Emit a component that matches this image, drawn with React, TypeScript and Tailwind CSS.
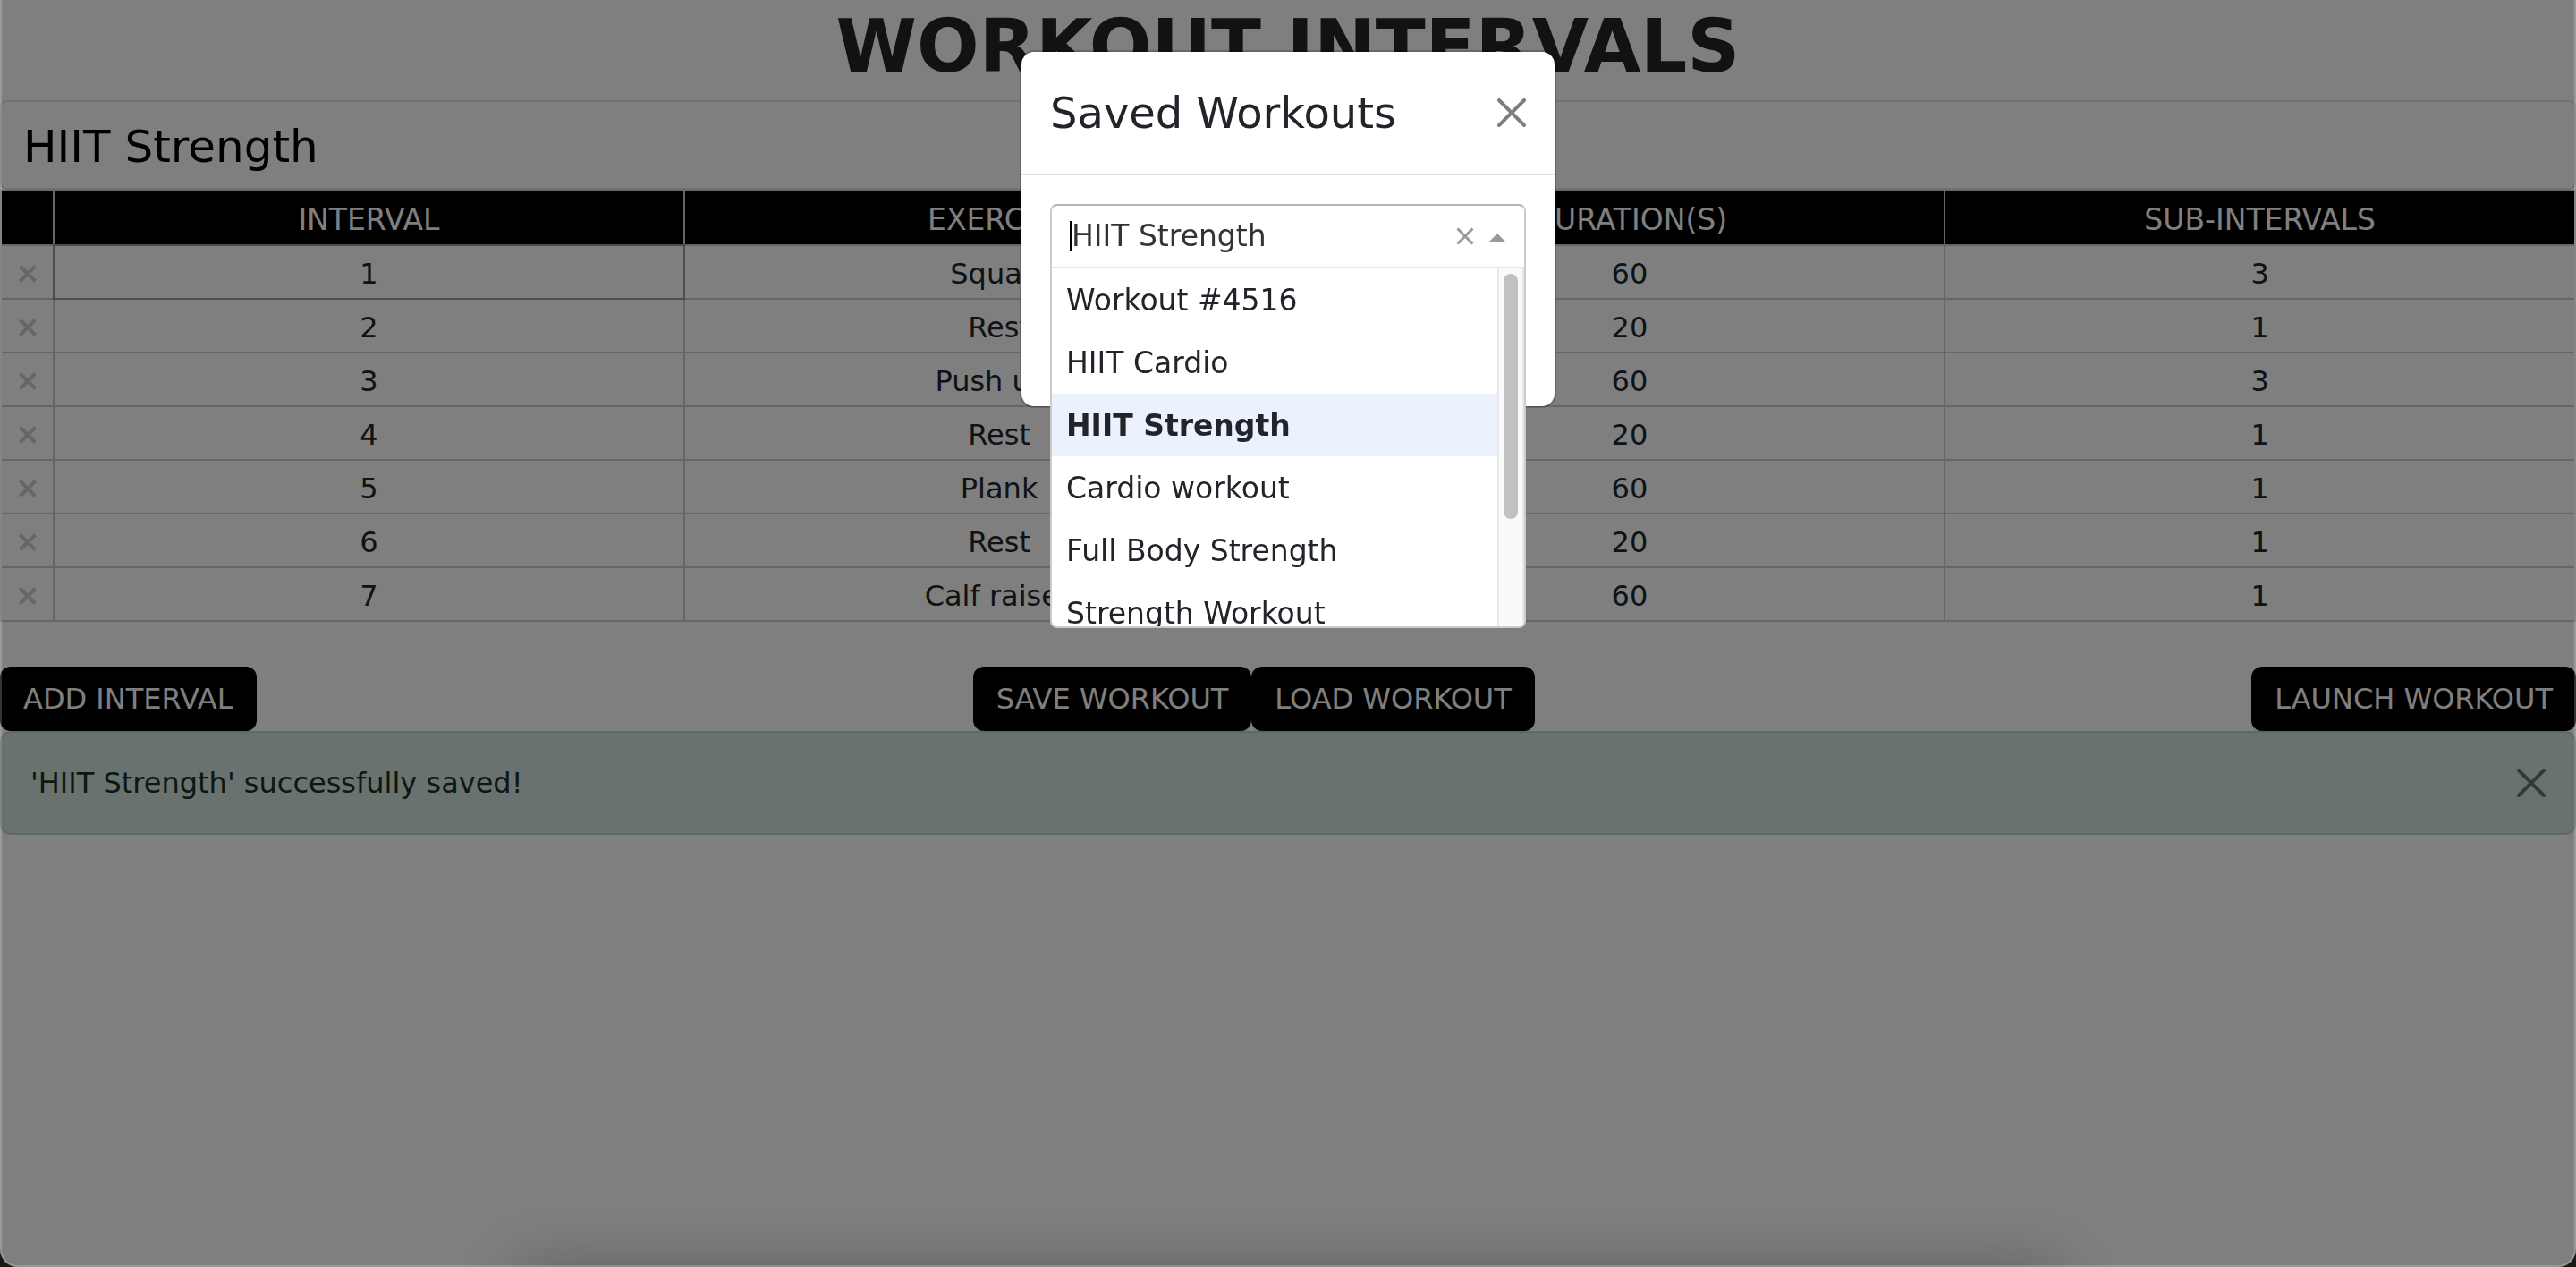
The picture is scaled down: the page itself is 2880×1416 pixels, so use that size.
import React from "react";

type Row = { id: number; exercise: string; duration: number; sub: number };

const rows: Row[] = [
  { id: 1, exercise: "Squats", duration: 60, sub: 3 },
  { id: 2, exercise: "Rest", duration: 20, sub: 1 },
  { id: 3, exercise: "Push ups", duration: 60, sub: 3 },
  { id: 4, exercise: "Rest", duration: 20, sub: 1 },
  { id: 5, exercise: "Plank", duration: 60, sub: 1 },
  { id: 6, exercise: "Rest", duration: 20, sub: 1 },
  { id: 7, exercise: "Calf raises", duration: 60, sub: 1 },
];

const options = [
  "Workout #4516",
  "HIIT Cardio",
  "HIIT Strength",
  "Cardio workout",
  "Full Body Strength",
  "Strength Workout",
];

function CloseIcon() {
  return (
    <svg viewBox="0 0 16 16" className="size-8" fill="#000" aria-hidden="true">
      <path d="M.293.293a1 1 0 011.414 0L8 6.586 14.293.293a1 1 0 111.414 1.414L9.414 8l6.293 6.293a1 1 0 01-1.414 1.414L8 9.414l-6.293 6.293a1 1 0 01-1.414-1.414L6.586 8 .293 1.707a1 1 0 010-1.414z" />
    </svg>
  );
}

function Cross({ className, width }: { className: string; width: number }) {
  return (
    <svg viewBox="0 0 20 20" className={className} fill="none" stroke="currentColor" strokeWidth={width} aria-hidden="true">
      <path d="M1.5 1.5 18.5 18.5M18.5 1.5 1.5 18.5" />
    </svg>
  );
}

function ActionButton({ children }: { children: React.ReactNode }) {
  return (
    <button type="button" className="rounded-xl bg-black px-[26px] py-3 whitespace-nowrap text-white">
      {children}
    </button>
  );
}

function IntervalTable() {
  const head = "h-[61px] border-2 border-[#ccc] bg-black pt-1 text-[33px] leading-[48px] font-normal text-white";
  const cell = "h-[60px] border-2 border-[#ccc] pt-1 text-center";
  const selected = "h-[60px] border-2 border-double border-[#999] pt-1 text-center";
  return (
    <table className="w-full table-fixed border-collapse">
      <colgroup>
        <col className="w-[59px]" />
        <col />
        <col />
        <col />
        <col />
      </colgroup>
      <thead>
        <tr>
          <th className={head} aria-label="Remove" />
          <th className={head}>INTERVAL</th>
          <th className={head}>EXERCISE</th>
          <th className={head}>DURATION(S)</th>
          <th className={head}>SUB-INTERVALS</th>
        </tr>
      </thead>
      <tbody>
        {rows.map((row) => (
          <tr key={row.id}>
            <td className={cell}>
              <button type="button" aria-label={`Remove interval ${row.id}`} className="block w-full text-[#ccc]">
                <Cross className="mx-auto size-5" width={4} />
              </button>
            </td>
            <td className={row.id === 1 ? selected : cell}>{row.id}</td>
            <td className={cell}>{row.exercise}</td>
            <td className={cell}>{row.duration}</td>
            <td className={cell}>{row.sub}</td>
          </tr>
        ))}
      </tbody>
    </table>
  );
}

function WorkoutSelect() {
  return (
    <div className="relative text-[33px] leading-[48px]">
      <div className="flex h-[72px] items-center rounded-t-lg border-2 border-t-[#b3b3b3] border-r-[#ccc] border-b-[#e6e6e6] border-l-[#ccc] bg-white px-5">
        <span className="h-[34px] w-0.5 bg-black" />
        <input
          aria-label="Saved workout"
          defaultValue="HIIT Strength"
          className="min-w-0 flex-1 bg-transparent text-[#333] outline-none"
        />
        <button type="button" aria-label="Clear" className="text-[#999]">
          <Cross className="size-5" width={3} />
        </button>
        <svg viewBox="0 0 20 10" className="mt-1 ml-4 h-2.5 w-5" fill="#999" aria-hidden="true">
          <path d="M10 0 20 10H0z" />
        </svg>
      </div>
      <div className="absolute inset-x-0 top-full flex h-[402px] overflow-hidden rounded-b-lg border-2 border-t-0 border-[#ccc] bg-white">
        <ul role="listbox" aria-label="Saved workouts" className="min-w-0 flex-1 overflow-hidden">
          {options.map((o) => (
            <li
              key={o}
              role="option"
              aria-selected={o === "HIIT Strength"}
              className={
                o === "HIIT Strength"
                  ? "flex h-[70px] items-center bg-[#ebf1fd] px-4 pt-0.5 font-bold"
                  : "flex h-[70px] items-center px-4 pt-0.5"
              }
            >
              {o}
            </li>
          ))}
        </ul>
        <div className="w-[30px] border-x-2 border-[#e8e8e8] bg-[#fafafa] px-[5px] pt-1.5">
          <div className="h-[274px] rounded-full bg-[#c1c1c1]" />
        </div>
      </div>
    </div>
  );
}

function SavedWorkoutsDialog() {
  return (
    <div className="fixed inset-0 flex items-start justify-center bg-black/50 pt-14">
      <div
        role="dialog"
        aria-label="Saved Workouts"
        className="w-[600px] rounded-2xl border-2 border-black/20 bg-white bg-clip-padding"
      >
        <header className="flex items-center justify-between border-b-2 border-[#dee2e6] p-8">
          <h2 className="text-5xl leading-[72px]">Saved Workouts</h2>
          <button type="button" aria-label="Close" className="opacity-50">
            <CloseIcon />
          </button>
        </header>
        <div className="px-8 pt-8 pb-[154px]">
          <WorkoutSelect />
        </div>
      </div>
    </div>
  );
}

/* Rounded window outline and the shade cast along the bottom edge. */
function WindowFrame() {
  return (
    <div className="pointer-events-none fixed inset-0 overflow-hidden">
      <div className="absolute inset-x-[20%] top-full h-24 shadow-[0_0_72px_rgba(0,0,0,0.26)]" />
      <div className="absolute inset-0 rounded-b-[20px] border-2 border-t-0 border-white/20 shadow-[0_0_0_20px_#1c1712]" />
    </div>
  );
}

export default function App() {
  return (
    <div className="min-h-screen overflow-hidden bg-white font-[Verdana,'DejaVu_Sans',sans-serif] text-[32px] leading-[48px] text-[#212529]">
      <h1 className="mb-3 pt-1 text-center text-[82px] leading-[96px] font-bold">WORKOUT INTERVALS</h1>
      <main>
        <input
          aria-label="Workout name"
          defaultValue="HIIT Strength"
          className="block h-[100px] w-full rounded-lg border-2 border-[#dee2e6] px-6 pt-1 text-[50px] text-black outline-none"
        />
        <IntervalTable />
      </main>
      <div className="mt-[50px] flex justify-between">
        <ActionButton>ADD INTERVAL</ActionButton>
        <div className="flex">
          <ActionButton>SAVE WORKOUT</ActionButton>
          <ActionButton>LOAD WORKOUT</ActionButton>
        </div>
        <ActionButton>LAUNCH WORKOUT</ActionButton>
      </div>
      <div
        role="alert"
        className="flex items-center justify-between rounded-xl border-2 border-[#bbd4c7] bg-[#d5e5df] p-8 text-[#163325]"
      >
        <p>'HIIT Strength' successfully saved!</p>
        <button type="button" aria-label="Dismiss" className="opacity-50">
          <CloseIcon />
        </button>
      </div>
      <SavedWorkoutsDialog />
      <WindowFrame />
    </div>
  );
}
